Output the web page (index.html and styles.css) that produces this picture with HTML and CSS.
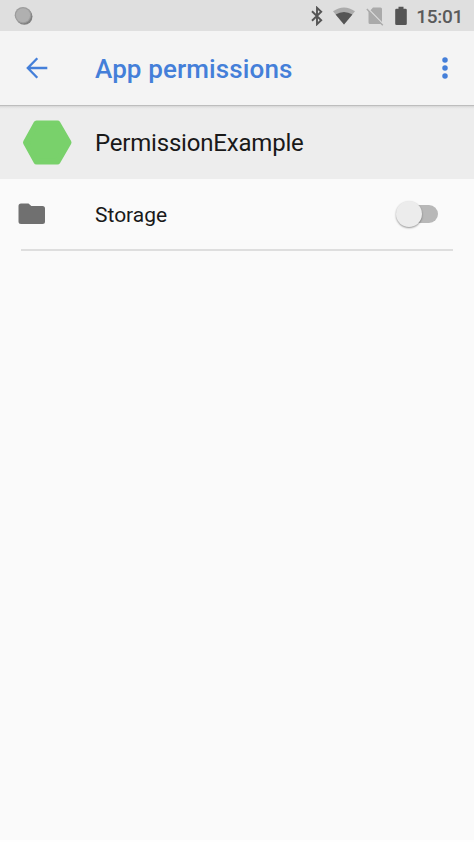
FILE: index.html
```html
<!DOCTYPE html>
<html lang="en">
<head>
<meta charset="utf-8">
<title>App permissions</title>
<link rel="stylesheet" href="styles.css">
</head>
<body>
<main class="screen">
  <header class="status">
    <svg class="notification" width="20" height="20" viewBox="0 0 20 20"><circle cx="10.300" cy="10.600" r="8.200" fill="#808080"/><circle cx="9" cy="9.200" r="8.300" fill="#9c9c9c"/><circle cx="9" cy="9.200" r="7" fill="#b0b0b0"/></svg>
    <div class="status-icons">
      <svg width="14" height="20" viewBox="0 0 14 20"><path d="M2 5.200 11.200 14.200 7 18.200V1.800L11.200 5.800 2 14.800" fill="none" stroke="#555" stroke-width="1.900"/></svg>
      <svg class="wifi" width="24" height="20" viewBox="0 0 24 20"><path d="M12 18.500 1 5.300Q12-2.500 23 5.300Z" fill="#ababab"/><path d="M12 18.500 3.600 8.400Q12 3.400 20.400 8.400Z" fill="#555"/></svg>
      <svg class="sim" width="18" height="20" viewBox="0 0 18 20"><path d="M7 1.500h7.500q1.500 0 1.500 1.500v12.900L4.500 4.200ZM2.500 4.500 15.500 18H4Q2.500 18 2.500 16.500Z" fill="#aaa"/><path d="m.8 3 16 16.200" stroke="#aaa" stroke-width="1.400"/></svg>
      <svg class="battery" width="12" height="20" viewBox="0 0 12 20"><path d="M3.500 .8h5v2h2q1.300 0 1.300 1.300v13.600q0 1.300-1.300 1.300h-9Q.2 19 .2 17.700V4.100Q.2 2.800 1.500 2.800h2Z" fill="#555"/></svg>
      <span class="clock">15:01</span>
    </div>
  </header>
  <nav class="toolbar">
    <svg class="back" width="22" height="22" viewBox="0 0 22 22"><path d="M11.300 1.300 1.800 11l9.500 9.700M1.800 11H21.300" fill="none" stroke="#447fd9" stroke-width="2.300"/></svg>
    <h1>App permissions</h1>
    <svg class="more" width="6" height="22" viewBox="0 0 6 22"><g fill="#447fd9"><circle cx="3" cy="3" r="2.750"/><circle cx="3" cy="11" r="2.750"/><circle cx="3" cy="19" r="2.750"/></g></svg>
  </nav>
  <section class="app">
    <svg class="app-icon" width="50" height="46" viewBox="0 0 50 46"><path d="M14.500 3.500h21L46.500 22.500 35.500 41.500h-21L4 22.500Z" fill="#79d16b" stroke="#79d16b" stroke-width="6" stroke-linejoin="round"/></svg>
    <h2>PermissionExample</h2>
  </section>
  <section class="permission">
    <svg class="folder" width="28" height="22" viewBox="0 0 28 22"><path d="M3 .5h7.500L13.300 3H24.500Q27 3 27 5.500v13q0 2.500-2.500 2.500H3Q.5 21 .5 18.500V3Q.5.5 3 .5Z" fill="#707070"/></svg>
    <span class="name">Storage</span>
    <span class="switch"><i class="thumb"></i><i class="track"></i></span>
  </section>
</main>
</body>
</html>
```
FILE: styles.css
```css
* { box-sizing: border-box; }
body { margin: 0; background: #fafafa; font-family: Roboto, sans-serif; color: #191919; }
.screen { height: 842px; overflow: hidden; border-bottom: 2px solid #fefefe; }
svg { display: block; flex: none; }
.status { height: 31px; background: #dfdfdf; display: flex; align-items: center; justify-content: space-between; padding: 0 11px 0 14px; }
.status-icons { display: flex; align-items: center; }
.wifi { margin-left: 8px; }
.sim { margin-left: 10px; }
.battery { margin-left: 11px; }
.clock { margin-left: 9px; font-size: 19px; font-weight: 500; line-height: 31px; letter-spacing: -0.3px; padding-top: 1px; color: #5a5a5a; }
.toolbar { height: 75px; background: #f4f4f4; border-bottom: 1px solid #bdbdbd; display: flex; align-items: center; padding: 1px 26px 0; }
.back, .more { margin-top: -1px; }
h1 { flex: 1; margin: 1px 0 0 47px; font-size: 26px; font-weight: 500; line-height: 32px; letter-spacing: 0.12px; color: #447fd9; }
.app { height: 73px; background: linear-gradient(#d6d6d6, #e8e8e8 2px, #ededed 4px); display: flex; align-items: center; padding-left: 22px; }
h2 { margin: 0 0 0 23px; font-size: 24px; font-weight: 400; line-height: 30px; letter-spacing: -0.2px; }
.permission { height: 72px; margin: 0 21px; padding-right: 15px; display: flex; align-items: center; border-bottom: 2px solid #dedede; }
.folder { margin-left: -3px; }
.name { flex: 1; margin-left: 49px; font-size: 21px; line-height: 28px; padding-top: 2px; }
.switch { display: flex; align-items: center; }
.thumb { width: 26px; height: 26px; border-radius: 50%; background: #ececec; box-shadow: 0 1px 2px #0006; z-index: 1; }
.track { width: 29px; height: 18px; margin-left: -13px; border-radius: 9px; background: #b8b8b8; }
```
